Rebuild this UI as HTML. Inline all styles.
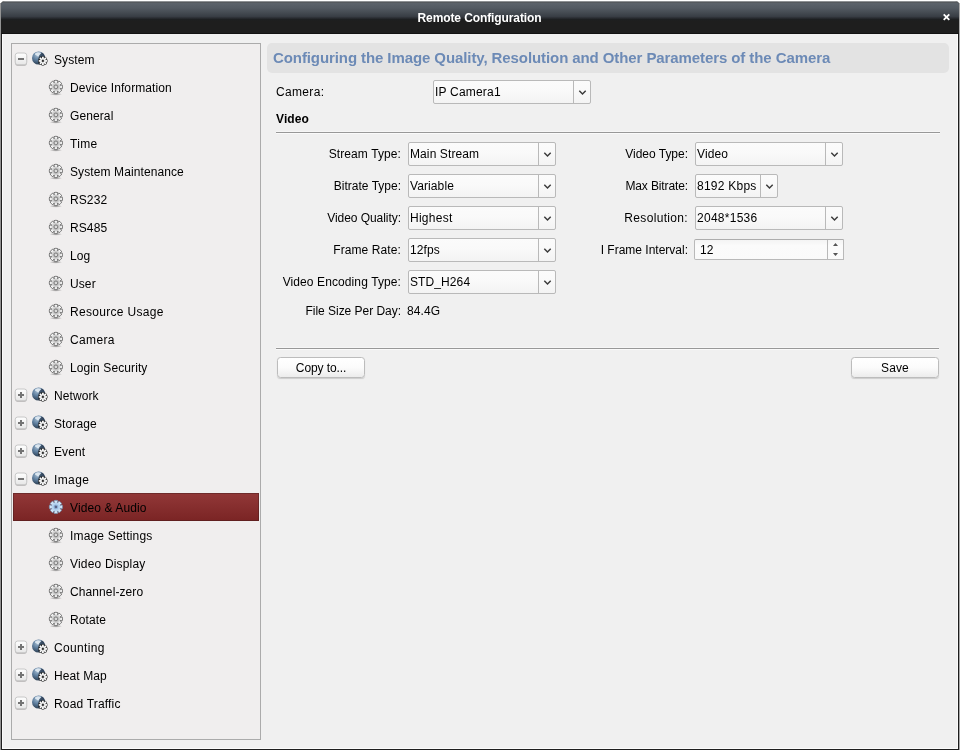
<!DOCTYPE html><html><head><meta charset="utf-8"><title>Remote Configuration</title><style>
*{box-sizing:border-box}
html,body{margin:0;padding:0}
#w{position:absolute;left:0;top:0;width:961px;height:750px;will-change:transform}
body{width:961px;height:750px;background:#fff;overflow:hidden;position:relative;font-family:"Liberation Sans",Arial,sans-serif;font-size:12px;color:#000;letter-spacing:0.1px}
.edgeL{position:absolute;left:0;top:3px;width:1px;height:747px;background:#939393}
.edgeR{position:absolute;left:959px;top:3px;width:1px;height:747px;background:#a9a9a9}
.win{position:absolute;left:1px;top:1px;width:958px;height:749px;background:#1e1e1e;border-radius:4px 4px 0 0}
.tb{position:absolute;left:0;top:0;width:958px;height:33px;border-radius:4px 4px 0 0;background:linear-gradient(#8e9194 0,#8e9194 1px,#54585c 1px,#565b60 2px,#5b626a 2.5px,#535a62 7px,#444a51 12px,#383d44 15.5px,#2a2d32 17px,#1d1f21 18.5px,#1e1e1e 20px,#1e1e1e 32px,#121212 32px,#121212 33px)}
.tt{position:absolute;left:0;top:10px;width:957px;text-align:center;color:#fff;font-weight:bold;font-size:12px;line-height:14px;letter-spacing:-0.1px}
.cx{position:absolute;left:941px;top:12px;width:9px;height:9px}
.body{position:absolute;left:2px;top:34px;width:956px;height:715px;background:#f0f0f0;border:1px solid #fbfbfb;border-top:0}
.side{position:absolute;left:11px;top:43px;width:250px;height:697px;border:1px solid #ababab;background:#f0eeee}
.row{position:absolute;left:13px;width:246px;height:28px;line-height:28px;white-space:nowrap}
.row.sel{background:linear-gradient(#923838,#7a2424);box-shadow:inset 0 0 0 1px rgba(60,25,25,.4)}
.row .t{position:absolute;top:1px}
.p .t{left:41px}
.c .t{left:57px}
.pm{position:absolute;left:0;top:6px;width:16px;height:16px}
.gl{position:absolute;left:18px;top:6px;width:18px;height:16px}
.ge{position:absolute;left:35px;top:6px;width:16px;height:18px}
.hdr{position:absolute;left:267px;top:43px;width:682px;height:30px;border-radius:5px;background:#e3e3e3;color:#6c8ab6;font-weight:bold;font-size:15px;line-height:30px;padding-left:6px;white-space:nowrap;letter-spacing:-0.09px}
.lab{position:absolute;white-space:nowrap;line-height:14px}
.r{text-align:right}
.selbox{position:absolute;height:24px;border:1px solid #b9b9b9;border-radius:2px;background:linear-gradient(#fbfbfb,#f9f9f9 50%,#f3f3f3);line-height:23px;padding-left:1px;white-space:nowrap}
.selbox .dv{position:absolute;right:16px;top:0;bottom:0;width:1px;background:#b9b9b9}
.selbox svg{position:absolute;right:3px;top:9px;width:9px;height:6px}
.spin{position:absolute;height:21px;border:1px solid #b9b9b9;border-top-color:#adadad;border-radius:2px 0 0 2px;background:linear-gradient(#f4f4f4,#fbfbfb 30%,#fafafa);line-height:20px;padding-left:5px;white-space:nowrap}
.hr{position:absolute;height:1px;background:#989898;box-shadow:0 1px 0 #fafafa,0 -1px 0 #f6f6f6}
.btn{position:absolute;width:88px;height:21px;border:1px solid #bcbcbc;border-radius:3.5px;background:linear-gradient(#ffffff,#fbfbfb 50%,#ececec);box-shadow:0 1px 1px rgba(0,0,0,.15);text-align:center;line-height:21px}
</style></head><body><div id="w">
<svg width="0" height="0" style="position:absolute">
<defs>
<radialGradient id="gb" cx="0.38" cy="0.3" r="0.75"><stop offset="0" stop-color="#9db6cc"/><stop offset="0.45" stop-color="#5d7d9d"/><stop offset="0.85" stop-color="#34495f"/><stop offset="1" stop-color="#2a3a4c"/></radialGradient>
<radialGradient id="gs" cx="0.5" cy="0.5" r="0.5"><stop offset="0" stop-color="#000" stop-opacity="0.4"/><stop offset="1" stop-color="#000" stop-opacity="0"/></radialGradient>
<radialGradient id="gf" cx="0.5" cy="0.5" r="0.5"><stop offset="0" stop-color="#b6b6b6"/><stop offset="0.5" stop-color="#cbcbcb"/><stop offset="0.8" stop-color="#f3f3f3"/><stop offset="1" stop-color="#ffffff"/></radialGradient>
<radialGradient id="gfs" cx="0.5" cy="0.5" r="0.5"><stop offset="0" stop-color="#9fc4ea"/><stop offset="0.55" stop-color="#b7d4f0"/><stop offset="1" stop-color="#e4f0fb"/></radialGradient>
<linearGradient id="pg" x1="0" y1="0" x2="0" y2="1"><stop offset="0" stop-color="#ffffff"/><stop offset="1" stop-color="#e6e6e6"/></linearGradient>
<symbol id="plus" viewBox="0 0 16 16">
<rect x="2.0" y="3.0" width="12.0" height="11.9" rx="2.8" fill="#000" opacity="0.2"/>
<rect x="2.2" y="2.0" width="11.6" height="11.8" rx="2.6" fill="url(#pg)" stroke="#c2c2c2" stroke-width="0.9"/>
<path d="M5 7h6v2h-6zM7 5h2v6h-2z" fill="#747474"/>
</symbol>
<symbol id="minus" viewBox="0 0 16 16">
<rect x="2.0" y="3.0" width="12.0" height="11.9" rx="2.8" fill="#000" opacity="0.2"/>
<rect x="2.2" y="2.0" width="11.6" height="11.8" rx="2.6" fill="url(#pg)" stroke="#c2c2c2" stroke-width="0.9"/>
<path d="M5 7h6v2h-6z" fill="#747474"/>
</symbol>
<symbol id="gear" viewBox="0 0 16 18">
<ellipse cx="7.9" cy="15.2" rx="6.3" ry="1.5" fill="url(#gs)"/>
<path d="M6.34 3.68L5.96 1.59A6.60 6.60 0 0 1 9.84 1.59L9.46 3.68L9.78 3.81L10.99 2.07A6.60 6.60 0 0 1 13.73 4.81L11.99 6.02L12.12 6.34L14.21 5.96A6.60 6.60 0 0 1 14.21 9.84L12.12 9.46L11.99 9.78L13.73 10.99A6.60 6.60 0 0 1 10.99 13.73L9.78 11.99L9.46 12.12L9.84 14.21A6.60 6.60 0 0 1 5.96 14.21L6.34 12.12L6.02 11.99L4.81 13.73A6.60 6.60 0 0 1 2.07 10.99L3.81 9.78L3.68 9.46L1.59 9.84A6.60 6.60 0 0 1 1.59 5.96L3.68 6.34L3.81 6.02L2.07 4.81A6.60 6.60 0 0 1 4.81 2.07L6.02 3.81Z" fill="url(#gf)" stroke="#6c6c6c" stroke-width="0.9" stroke-linejoin="round"/>
<circle cx="7.9" cy="7.9" r="1.9" fill="#dadada" stroke="#727272" stroke-width="0.9"/>
</symbol>
<symbol id="gearsel" viewBox="0 0 16 18">
<path d="M6.34 3.68L5.96 1.59A6.60 6.60 0 0 1 9.84 1.59L9.46 3.68L9.78 3.81L10.99 2.07A6.60 6.60 0 0 1 13.73 4.81L11.99 6.02L12.12 6.34L14.21 5.96A6.60 6.60 0 0 1 14.21 9.84L12.12 9.46L11.99 9.78L13.73 10.99A6.60 6.60 0 0 1 10.99 13.73L9.78 11.99L9.46 12.12L9.84 14.21A6.60 6.60 0 0 1 5.96 14.21L6.34 12.12L6.02 11.99L4.81 13.73A6.60 6.60 0 0 1 2.07 10.99L3.81 9.78L3.68 9.46L1.59 9.84A6.60 6.60 0 0 1 1.59 5.96L3.68 6.34L3.81 6.02L2.07 4.81A6.60 6.60 0 0 1 4.81 2.07L6.02 3.81Z" fill="url(#gfs)" stroke="#6f88a8" stroke-width="0.7" stroke-linejoin="round"/>
<circle cx="7.9" cy="7.9" r="1.8" fill="#5a6488" stroke="#8fb2da" stroke-width="0.9"/>
</symbol>
<symbol id="globe" viewBox="0 0 18 16">
<clipPath id="gc"><circle cx="7.6" cy="7.0" r="6.6"/></clipPath>
<circle cx="7.6" cy="7.0" r="6.6" fill="url(#gb)"/>
<g clip-path="url(#gc)">
<path d="M4.0 2.7 C5.4 1.1 8.6 0.8 10.4 1.9 C9.7 2.9 9.0 3.4 8.5 4.1 C8.0 4.8 7.9 5.5 7.3 5.8 C6.6 5.7 6.3 5.0 5.6 4.6 C4.9 4.2 3.8 3.7 4.0 2.7Z" fill="#e2ecf3" opacity="0.92"/>
<path d="M11.0 1.5 C12.7 2.5 13.7 4.0 14.2 5.7 C12.6 5.1 11.0 5.5 9.8 6.6 C9.0 6.0 8.2 5.9 7.6 5.8 C8.6 4.2 9.6 2.6 11.0 1.5Z" fill="#243246" opacity="0.62"/>
<circle cx="11.9" cy="9.9" r="5.0" fill="#18212c" opacity="0.6"/>
</g>
<g transform="translate(11.9,9.9)">
<path d="M-0.74 -2.70L-0.97 -4.04A4.15 4.15 0 0 1 0.97 -4.04L0.74 -2.70L1.39 -2.43L2.17 -3.54A4.15 4.15 0 0 1 3.54 -2.17L2.43 -1.39L2.70 -0.74L4.04 -0.97A4.15 4.15 0 0 1 4.04 0.97L2.70 0.74L2.43 1.39L3.54 2.17A4.15 4.15 0 0 1 2.17 3.54L1.39 2.43L0.74 2.70L0.97 4.04A4.15 4.15 0 0 1 -0.97 4.04L-0.74 2.70L-1.39 2.43L-2.17 3.54A4.15 4.15 0 0 1 -3.54 2.17L-2.43 1.39L-2.70 0.74L-4.04 0.97A4.15 4.15 0 0 1 -4.04 -0.97L-2.70 -0.74L-2.43 -1.39L-3.54 -2.17A4.15 4.15 0 0 1 -2.17 -3.54L-1.39 -2.43Z" fill="#2a2a2a" stroke="#2a2a2a" stroke-width="1.2" stroke-linejoin="round" opacity="0.85"/><path d="M-0.74 -2.70L-0.97 -4.04A4.15 4.15 0 0 1 0.97 -4.04L0.74 -2.70L1.39 -2.43L2.17 -3.54A4.15 4.15 0 0 1 3.54 -2.17L2.43 -1.39L2.70 -0.74L4.04 -0.97A4.15 4.15 0 0 1 4.04 0.97L2.70 0.74L2.43 1.39L3.54 2.17A4.15 4.15 0 0 1 2.17 3.54L1.39 2.43L0.74 2.70L0.97 4.04A4.15 4.15 0 0 1 -0.97 4.04L-0.74 2.70L-1.39 2.43L-2.17 3.54A4.15 4.15 0 0 1 -3.54 2.17L-2.43 1.39L-2.70 0.74L-4.04 0.97A4.15 4.15 0 0 1 -4.04 -0.97L-2.70 -0.74L-2.43 -1.39L-3.54 -2.17A4.15 4.15 0 0 1 -2.17 -3.54L-1.39 -2.43Z" fill="#ffffff"/>
<circle cx="0" cy="0" r="1.8" fill="#c4c4c4"/>
<circle cx="0" cy="0" r="1.05" fill="#2b2b2b"/>
</g>
</symbol>
</defs></svg>
<div class="edgeL"></div><div class="edgeR"></div><div class="win"><div class="tb"></div><div class="tt">Remote Configuration</div>
<svg class="cx" viewBox="0 0 9 9"><path d="M1.7 1.3L7.3 6.9M7.3 1.3L1.7 6.9" stroke="#fff" stroke-width="1.8" stroke-linecap="butt"/></svg>
</div>
<div class="body"></div>
<div class="side"></div>
<div class="row p" style="top:45px"><svg class="pm"><use href="#minus"/></svg><svg class="gl"><use href="#globe"/></svg><span class="t">System</span></div>
<div class="row c" style="top:73px"><svg class="ge"><use href="#gear"/></svg><span class="t">Device Information</span></div>
<div class="row c" style="top:101px"><svg class="ge"><use href="#gear"/></svg><span class="t">General</span></div>
<div class="row c" style="top:129px"><svg class="ge"><use href="#gear"/></svg><span class="t" style="letter-spacing:0.35px">Time</span></div>
<div class="row c" style="top:157px"><svg class="ge"><use href="#gear"/></svg><span class="t">System Maintenance</span></div>
<div class="row c" style="top:185px"><svg class="ge"><use href="#gear"/></svg><span class="t">RS232</span></div>
<div class="row c" style="top:213px"><svg class="ge"><use href="#gear"/></svg><span class="t">RS485</span></div>
<div class="row c" style="top:241px"><svg class="ge"><use href="#gear"/></svg><span class="t">Log</span></div>
<div class="row c" style="top:269px"><svg class="ge"><use href="#gear"/></svg><span class="t">User</span></div>
<div class="row c" style="top:297px"><svg class="ge"><use href="#gear"/></svg><span class="t" style="letter-spacing:0.31px">Resource Usage</span></div>
<div class="row c" style="top:325px"><svg class="ge"><use href="#gear"/></svg><span class="t" style="letter-spacing:0.35px">Camera</span></div>
<div class="row c" style="top:353px"><svg class="ge"><use href="#gear"/></svg><span class="t">Login Security</span></div>
<div class="row p" style="top:381px"><svg class="pm"><use href="#plus"/></svg><svg class="gl"><use href="#globe"/></svg><span class="t">Network</span></div>
<div class="row p" style="top:409px"><svg class="pm"><use href="#plus"/></svg><svg class="gl"><use href="#globe"/></svg><span class="t">Storage</span></div>
<div class="row p" style="top:437px"><svg class="pm"><use href="#plus"/></svg><svg class="gl"><use href="#globe"/></svg><span class="t">Event</span></div>
<div class="row p" style="top:465px"><svg class="pm"><use href="#minus"/></svg><svg class="gl"><use href="#globe"/></svg><span class="t" style="letter-spacing:0.38px">Image</span></div>
<div class="row c sel" style="top:493px"><svg class="ge"><use href="#gearsel"/></svg><span class="t">Video &amp; Audio</span></div>
<div class="row c" style="top:521px"><svg class="ge"><use href="#gear"/></svg><span class="t" style="letter-spacing:0.17px">Image Settings</span></div>
<div class="row c" style="top:549px"><svg class="ge"><use href="#gear"/></svg><span class="t" style="letter-spacing:0.18px">Video Display</span></div>
<div class="row c" style="top:577px"><svg class="ge"><use href="#gear"/></svg><span class="t">Channel-zero</span></div>
<div class="row c" style="top:605px"><svg class="ge"><use href="#gear"/></svg><span class="t">Rotate</span></div>
<div class="row p" style="top:633px"><svg class="pm"><use href="#plus"/></svg><svg class="gl"><use href="#globe"/></svg><span class="t" style="letter-spacing:0.35px">Counting</span></div>
<div class="row p" style="top:661px"><svg class="pm"><use href="#plus"/></svg><svg class="gl"><use href="#globe"/></svg><span class="t">Heat Map</span></div>
<div class="row p" style="top:689px"><svg class="pm"><use href="#plus"/></svg><svg class="gl"><use href="#globe"/></svg><span class="t" style="letter-spacing:0.18px">Road Traffic</span></div>
<div class="hdr">Configuring the Image Quality, Resolution and Other Parameters of the Camera</div>
<div class="lab" style="left:276px;top:85px;letter-spacing:0.34px">Camera:</div>
<div class="selbox" style="left:433px;top:80px;width:158px;letter-spacing:0.2px">IP Camera1<span class="dv"></span><svg viewBox="0 0 9 6"><path d="M1.3 0.7L4.5 3.9L7.7 0.7" fill="none" stroke="#3a3a3a" stroke-width="1.45"/></svg></div>
<div class="lab" style="left:276px;top:112px;font-weight:bold">Video</div>
<div class="hr" style="left:276px;top:132px;width:664px"></div>
<div class="lab r" style="left:250px;width:151px;top:147px;letter-spacing:0.1px">Stream Type:</div>
<div class="selbox" style="left:408px;top:142px;width:148px;letter-spacing:0.1px">Main Stream<span class="dv"></span><svg viewBox="0 0 9 6"><path d="M1.3 0.7L4.5 3.9L7.7 0.7" fill="none" stroke="#3a3a3a" stroke-width="1.45"/></svg></div>
<div class="lab r" style="left:250px;width:151px;top:179px;letter-spacing:0.0px">Bitrate Type:</div>
<div class="selbox" style="left:408px;top:174px;width:148px;letter-spacing:0.1px">Variable<span class="dv"></span><svg viewBox="0 0 9 6"><path d="M1.3 0.7L4.5 3.9L7.7 0.7" fill="none" stroke="#3a3a3a" stroke-width="1.45"/></svg></div>
<div class="lab r" style="left:250px;width:151px;top:211px;letter-spacing:-0.05px">Video Quality:</div>
<div class="selbox" style="left:408px;top:206px;width:148px;letter-spacing:0.27px">Highest<span class="dv"></span><svg viewBox="0 0 9 6"><path d="M1.3 0.7L4.5 3.9L7.7 0.7" fill="none" stroke="#3a3a3a" stroke-width="1.45"/></svg></div>
<div class="lab r" style="left:250px;width:151px;top:243px;letter-spacing:0.1px">Frame Rate:</div>
<div class="selbox" style="left:408px;top:238px;width:148px;letter-spacing:0.1px">12fps<span class="dv"></span><svg viewBox="0 0 9 6"><path d="M1.3 0.7L4.5 3.9L7.7 0.7" fill="none" stroke="#3a3a3a" stroke-width="1.45"/></svg></div>
<div class="lab r" style="left:250px;width:151px;top:275px;letter-spacing:0.1px">Video Encoding Type:</div>
<div class="selbox" style="left:408px;top:270px;width:148px;letter-spacing:0.1px">STD_H264<span class="dv"></span><svg viewBox="0 0 9 6"><path d="M1.3 0.7L4.5 3.9L7.7 0.7" fill="none" stroke="#3a3a3a" stroke-width="1.45"/></svg></div>
<div class="lab r" style="left:250px;width:151px;top:304px;letter-spacing:-0.03px">File Size Per Day:</div>
<div class="lab" style="left:407px;top:304px">84.4G</div>
<div class="lab r" style="left:560px;width:128px;top:147px;letter-spacing:-0.02px">Video Type:</div>
<div class="selbox" style="left:695px;top:142px;width:148px;letter-spacing:0.1px">Video<span class="dv"></span><svg viewBox="0 0 9 6"><path d="M1.3 0.7L4.5 3.9L7.7 0.7" fill="none" stroke="#3a3a3a" stroke-width="1.45"/></svg></div>
<div class="lab r" style="left:560px;width:128px;top:179px;letter-spacing:-0.12px">Max Bitrate:</div>
<div class="selbox" style="left:695px;top:174px;width:83px;letter-spacing:0.24px">8192 Kbps<span class="dv"></span><svg viewBox="0 0 9 6"><path d="M1.3 0.7L4.5 3.9L7.7 0.7" fill="none" stroke="#3a3a3a" stroke-width="1.45"/></svg></div>
<div class="lab r" style="left:560px;width:128px;top:211px;letter-spacing:0.33px">Resolution:</div>
<div class="selbox" style="left:695px;top:206px;width:148px;letter-spacing:0.27px">2048*1536<span class="dv"></span><svg viewBox="0 0 9 6"><path d="M1.3 0.7L4.5 3.9L7.7 0.7" fill="none" stroke="#3a3a3a" stroke-width="1.45"/></svg></div>
<div class="lab r" style="left:560px;width:128px;top:243px;letter-spacing:0px">I Frame Interval:</div>
<div class="spin" style="left:694px;top:239px;width:150px">12<span style="position:absolute;right:15px;top:0;bottom:0;width:1px;background:#b9b9b9"></span><svg style="position:absolute;left:137px;top:3px;width:7px;height:14px" viewBox="0 0 7 14"><path d="M1 3.1L3.5 0.1L6 3.1Z M1 10.1L3.5 13.1L6 10.1Z" fill="#555"/></svg></div>
<div class="hr" style="left:276px;top:348px;width:663px"></div>
<div class="btn" style="left:277px;top:357px;letter-spacing:-0.1px">Copy to...</div>
<div class="btn" style="left:851px;top:357px">Save</div>
</div></body></html>
